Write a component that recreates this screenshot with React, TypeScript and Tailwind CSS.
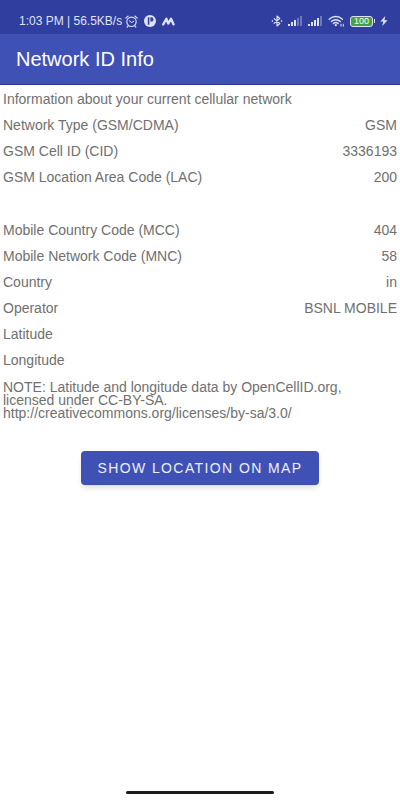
import React from 'react';

const cellRows = [
  { label: 'Network Type (GSM/CDMA)', value: 'GSM' },
  { label: 'GSM Cell ID (CID)', value: '3336193' },
  { label: 'GSM Location Area Code (LAC)', value: '200' },
];

const networkRows = [
  { label: 'Mobile Country Code (MCC)', value: '404' },
  { label: 'Mobile Network Code (MNC)', value: '58' },
  { label: 'Country', value: 'in' },
  { label: 'Operator', value: 'BSNL MOBILE' },
  { label: 'Latitude', value: '' },
  { label: 'Longitude', value: '' },
];

type Row = { label: string; value: string };

const InfoList: React.FC<{ rows: Row[] }> = ({ rows }) => (
  <dl>
    {rows.map(row => (
      <div key={row.label} className="flex h-[26px] items-center justify-between">
        <dt>{row.label}</dt>
        <dd>{row.value}</dd>
      </div>
    ))}
  </dl>
);

const AlarmIcon = () => (
  <svg width="13" height="13" viewBox="0 0 13 13" fill="none" stroke="currentColor" strokeLinecap="round">
    <circle cx="6.5" cy="6.8" r="4.7" strokeWidth="1.1" />
    <path d="M4.4 5.8l2.1 1.7 2.2-1.2" strokeWidth="1" />
    <path d="M.8 3.2L3.2 1M12.2 3.2L9.8 1M3.2 10.8l-1.1 1.3M9.8 10.8l1.1 1.3" strokeWidth="1.1" />
  </svg>
);

const ParkingIcon = () => (
  <svg width="12" height="12" viewBox="0 0 12 12">
    <circle cx="6" cy="6" r="6" fill="currentColor" />
    <path d="M3.8 2.2h1.6v7.6H3.8zM6.4 2.2h.9a2.2 2.2 0 0 1 0 4.4h-.9z" fill="#303f9f" />
  </svg>
);

const WaveIcon = () => (
  <svg width="13" height="9" viewBox="0 0 13 9" fill="none" stroke="currentColor" strokeLinecap="round" strokeLinejoin="round">
    <path d="M1.2 7.4L4.4 1.8 6.2 6.6 9 1.8 11.6 7.4" strokeWidth="2.3" />
  </svg>
);

const BluetoothIcon = () => (
  <svg width="12" height="12" viewBox="0 0 12 12" fill="none" stroke="currentColor" strokeWidth="1.1" strokeLinejoin="round">
    <path d="M2.8 3.3l6 5.2L6 11V1l2.8 2.5-6 5.2" />
    <path d="M.8 6h1.3M9.9 6h1.3" strokeWidth="1.3" />
  </svg>
);

const SignalIcon: React.FC<{ bars: number }> = ({ bars }) => (
  <svg width="15" height="10" viewBox="0 0 15 10" fill="currentColor">
    {[2, 4, 6, 8, 10].map((h, i) => (
      <rect key={h} x={i * 3} y={10 - h} width="2" height={h} opacity={i < bars ? 1 : 0.35} />
    ))}
  </svg>
);

const WifiIcon = () => (
  <svg width="17" height="12" viewBox="0 0 17 12" fill="none" stroke="currentColor" strokeLinecap="round">
    <path d="M1.2 4.2a9.6 9.6 0 0 1 13.2 0M3.3 6.5a6.6 6.6 0 0 1 9 0M5.4 8.6a3.6 3.6 0 0 1 4.8 0" strokeWidth="1.4" />
    <circle cx="7.8" cy="10.2" r="1.1" fill="currentColor" stroke="none" />
    <path d="M13 9.2v2M15.3 9.2v2" strokeWidth="1" />
  </svg>
);

const BoltIcon = () => (
  <svg width="8" height="10" viewBox="0 0 8 10" fill="currentColor">
    <path d="M5.2 0L.4 5.6h2.9L2.2 10 7.6 4.2H4.5z" />
  </svg>
);

const StatusBar = () => (
  <div className="flex h-[34px] items-center justify-between bg-[#303f9f] pt-2 pr-3 pl-[19px] text-[#dfe3f8]">
    <div className="flex items-center">
      <span className="text-[12px] leading-4">1:03 PM | 56.5KB/s</span>
      <div className="ml-[3px] flex items-center gap-[6px]">
        <AlarmIcon />
        <ParkingIcon />
        <WaveIcon />
      </div>
    </div>
    <div className="flex items-center gap-[5px]">
      <BluetoothIcon />
      <SignalIcon bars={3} />
      <SignalIcon bars={4} />
      <WifiIcon />
      <div className="flex items-center gap-px">
        <div className="flex h-[11px] w-[23px] items-center justify-center rounded-[3px] border border-[#dfe3f8] bg-[#43a047] text-[9px] leading-none text-white">
          100
        </div>
        <div className="h-1 w-px bg-[#dfe3f8]" />
      </div>
      <BoltIcon />
    </div>
  </div>
);

export default function App() {
  return (
    <div className="flex min-h-screen flex-col bg-white font-['Liberation_Sans',Arial,sans-serif] text-[#707070]">
      <StatusBar />
      <header className="flex h-[51px] items-center border-b border-[#283593] bg-[#3f51b5] px-4">
        <h1 className="text-[20px] leading-6 text-white">Network ID Info</h1>
      </header>

      <main className="flex-1 px-[3px] text-[14px] leading-4">
        <p className="flex h-[27px] items-center">Information about your current cellular network</p>
        <InfoList rows={cellRows} />
        <div className="h-[27px]" />
        <InfoList rows={networkRows} />
        <p className="mt-2 leading-[13px]">
          NOTE: Latitude and longitude data by OpenCellID.org,
          <br />
          licensed under CC-BY-SA.
          <br />
          http://creativecommons.org/licenses/by-sa/3.0/
        </p>
        <div className="mt-[31px] flex justify-center">
          <button type="button" className="h-[34px] rounded-[4px] bg-[#3f51b5] px-4 tracking-widest text-[#eef0fb] shadow-md">
            SHOW LOCATION ON MAP
          </button>
        </div>
      </main>

      <footer className="flex justify-center pb-[6px]">
        <div className="h-[3px] w-[37%] rounded-full bg-[#1c1c1c]" />
      </footer>
    </div>
  );
}
